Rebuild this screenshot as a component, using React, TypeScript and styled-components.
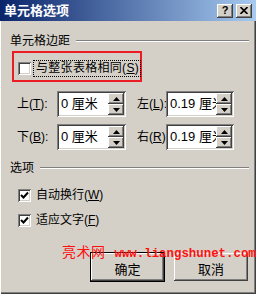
import React from 'react';
import styled, { createGlobalStyle } from 'styled-components';

const GlobalStyle = createGlobalStyle`
  html, body {
    margin: 0;
    padding: 0;
    background: #d4d0c8;
  }
  * {
    box-sizing: border-box;
  }
`;

const raised = `
  box-shadow: inset -1px -1px #404040, inset 1px 1px #ffffff,
    inset -2px -2px #808080, inset 2px 2px #d4d0c8;
`;

const sunken = `
  box-shadow: inset 1px 1px #808080, inset -1px -1px #ffffff,
    inset 2px 2px #404040, inset -2px -2px #d4d0c8;
`;

const Window = styled.div`
  position: relative;
  width: 256px;
  height: 294px;
  background: #d4d0c8;
  display: flex;
  flex-direction: column;
  font-family: 'Liberation Sans', 'Noto Sans CJK SC', sans-serif;
  font-size: 12px;
  color: #000;
  box-shadow: inset 1px 0 #ffffff, inset -1px -1px #404040,
    inset -2px -2px #808080;
  overflow: hidden;
`;

const TitleBar = styled.div`
  height: 21px;
  display: flex;
  align-items: center;
  padding: 0 4px;
  background: linear-gradient(to right, #0a246a, #a6caf0);
`;

const Title = styled.div`
  flex: 1;
  color: #fff;
  font-family: 'Noto Sans CJK SC', sans-serif;
  font-weight: bold;
  font-size: 13px;
  line-height: 14px;
  margin-top: -1px;
`;

const TitleButton = styled.div`
  width: 16px;
  height: 14px;
  margin-left: 3px;
  background: #d4d0c8;
  ${raised}
  display: flex;
  align-items: center;
  justify-content: center;
  font-family: 'Liberation Sans', sans-serif;
  font-weight: bold;
  font-size: 11px;
  line-height: 1;
  padding-bottom: 1px;
`;

const Body = styled.div`
  flex: 1;
  display: flex;
  flex-direction: column;
  padding: 0 7px 0 10px;
`;

const GroupHeader = styled.div<{ $top: number }>`
  display: flex;
  align-items: center;
  height: 14px;
  margin-top: ${(p) => p.$top}px;
  line-height: 14px;
`;

const GroupLine = styled.div`
  flex: 1;
  height: 2px;
  margin-left: 6px;
  border-top: 1px solid #808080;
  border-bottom: 1px solid #ffffff;
`;

const FocusFrame = styled.div`
  width: 130px;
  height: 31px;
  margin: 3px 0 0 2px;
  border: 2px solid #ec1c24;
  display: flex;
  align-items: center;
  padding: 3px 0 0 4px;
`;

const CheckRow = styled.label<{ $top: number }>`
  display: flex;
  align-items: center;
  height: 17px;
  margin-top: ${(p) => p.$top}px;
  padding-left: 8px;
`;

const Box = styled.span`
  width: 13px;
  height: 13px;
  flex: none;
  background: #fff;
  ${sunken}
  display: flex;
  align-items: center;
  justify-content: center;
`;

const CheckText = styled.span<{ $focused?: boolean }>`
  margin-left: 2px;
  height: 17px;
  line-height: 15px;
  padding: 0 1px 0 2px;
  letter-spacing: ${(p) => (p.$focused ? '0.3px' : '0')};
  border: 1px dotted ${(p) => (p.$focused ? '#000' : 'transparent')};
  white-space: nowrap;
`;

const SpinGrid = styled.div`
  display: grid;
  grid-template-columns: 40px 69px 40px 68px;
  row-gap: 7px;
  margin: 9px 0 0 7px;
  & > :nth-child(4n + 3) {
    margin-left: 11px;
  }
`;

const SpinLabel = styled.div`
  height: 26px;
  line-height: 26px;
  white-space: nowrap;
`;

const SpinBox = styled.div`
  height: 26px;
  background: #fff;
  ${sunken}
  display: flex;
  padding: 2px;
  overflow: hidden;
`;

const SpinValue = styled.div`
  flex: 1;
  padding-left: 2px;
  font-size: 13px;
  line-height: 22px;
  white-space: nowrap;
  overflow: hidden;
`;

const SpinButtons = styled.div`
  width: 16px;
  display: flex;
  flex-direction: column;
`;

const SpinButton = styled.div`
  flex: 1;
  background: #d4d0c8;
  ${raised}
  display: flex;
  align-items: center;
  justify-content: center;
`;

const ButtonRow = styled.div`
  display: flex;
  justify-content: flex-end;
  align-items: center;
  gap: 9px;
  margin-top: 23px;
  padding-right: 1px;
`;

const PushButton = styled.div<{ $default?: boolean }>`
  width: ${(p) => (p.$default ? 75 : 74)}px;
  height: ${(p) => (p.$default ? 30 : 28)}px;
  padding-top: 3px;
  background: #d4d0c8;
  border: ${(p) => (p.$default ? '1px solid #000' : 'none')};
  ${raised}
  display: flex;
  align-items: center;
  justify-content: center;
  font-family: 'Noto Sans CJK SC', sans-serif;
  font-size: 13px;
`;

const Watermark = styled.div`
  position: absolute;
  left: 62px;
  top: 241px;
  display: flex;
  align-items: baseline;
  gap: 9px;
  color: #ff1010;
  white-space: nowrap;
`;

const WatermarkName = styled.span`
  font-family: 'Noto Sans CJK SC', sans-serif;
  font-size: 14px;
  letter-spacing: 0.5px;
`;

const WatermarkUrl = styled.span`
  font-family: 'Liberation Mono', monospace;
  font-size: 12.4px;
  font-weight: bold;
`;

const Tri = ({ up }: { up?: boolean }) => (
  <svg width="7" height="4" viewBox="0 0 7 4">
    <path d={up ? 'M3.5 0 L7 4 L0 4 Z' : 'M0 0 L7 0 L3.5 4 Z'} fill="#000" />
  </svg>
);

const Check = () => (
  <svg width="9" height="9" viewBox="0 0 9 9">
    <path d="M1 4 L3.5 6.5 L8 1.5" stroke="#000" strokeWidth="2" fill="none" />
  </svg>
);

const Spin = ({ value }: { value: string }) => (
  <SpinBox>
    <SpinValue>{value}</SpinValue>
    <SpinButtons>
      <SpinButton>
        <Tri up />
      </SpinButton>
      <SpinButton>
        <Tri />
      </SpinButton>
    </SpinButtons>
  </SpinBox>
);

const margins = [
  { label: '上', key: 'T', value: '0 厘米' },
  { label: '左', key: 'L', value: '0.19 厘米' },
  { label: '下', key: 'B', value: '0 厘米' },
  { label: '右', key: 'R', value: '0.19 厘米' },
];

export default function App() {
  return (
    <>
      <GlobalStyle />
      <Window>
        <TitleBar>
          <Title>单元格选项</Title>
          <TitleButton>?</TitleButton>
          <TitleButton>
            <svg width="8" height="7" viewBox="0 0 8 7">
              <path d="M0.5 0 L7.5 7 M7.5 0 L0.5 7" stroke="#000" strokeWidth="1.6" />
            </svg>
          </TitleButton>
        </TitleBar>
        <Body>
          <GroupHeader $top={13}>
            单元格边距
            <GroupLine />
          </GroupHeader>
          <FocusFrame>
            <Box />
            <CheckText $focused>
              与整张表格相同(<u>S</u>)
            </CheckText>
          </FocusFrame>
          <SpinGrid>
            {margins.map((m) => (
              <React.Fragment key={m.key}>
                <SpinLabel>
                  {m.label}(<u>{m.key}</u>):
                </SpinLabel>
                <Spin value={m.value} />
              </React.Fragment>
            ))}
          </SpinGrid>
          <GroupHeader $top={11}>
            选项
            <GroupLine />
          </GroupHeader>
          <CheckRow $top={12}>
            <Box>
              <Check />
            </Box>
            <CheckText>
              自动换行(<u>W</u>)
            </CheckText>
          </CheckRow>
          <CheckRow $top={8}>
            <Box>
              <Check />
            </Box>
            <CheckText>
              适应文字(<u>F</u>)
            </CheckText>
          </CheckRow>
          <ButtonRow>
            <PushButton $default>确定</PushButton>
            <PushButton>取消</PushButton>
          </ButtonRow>
        </Body>
        <Watermark>
          <WatermarkName>亮术网</WatermarkName>
          <WatermarkUrl>www.liangshunet.com</WatermarkUrl>
        </Watermark>
      </Window>
    </>
  );
}
